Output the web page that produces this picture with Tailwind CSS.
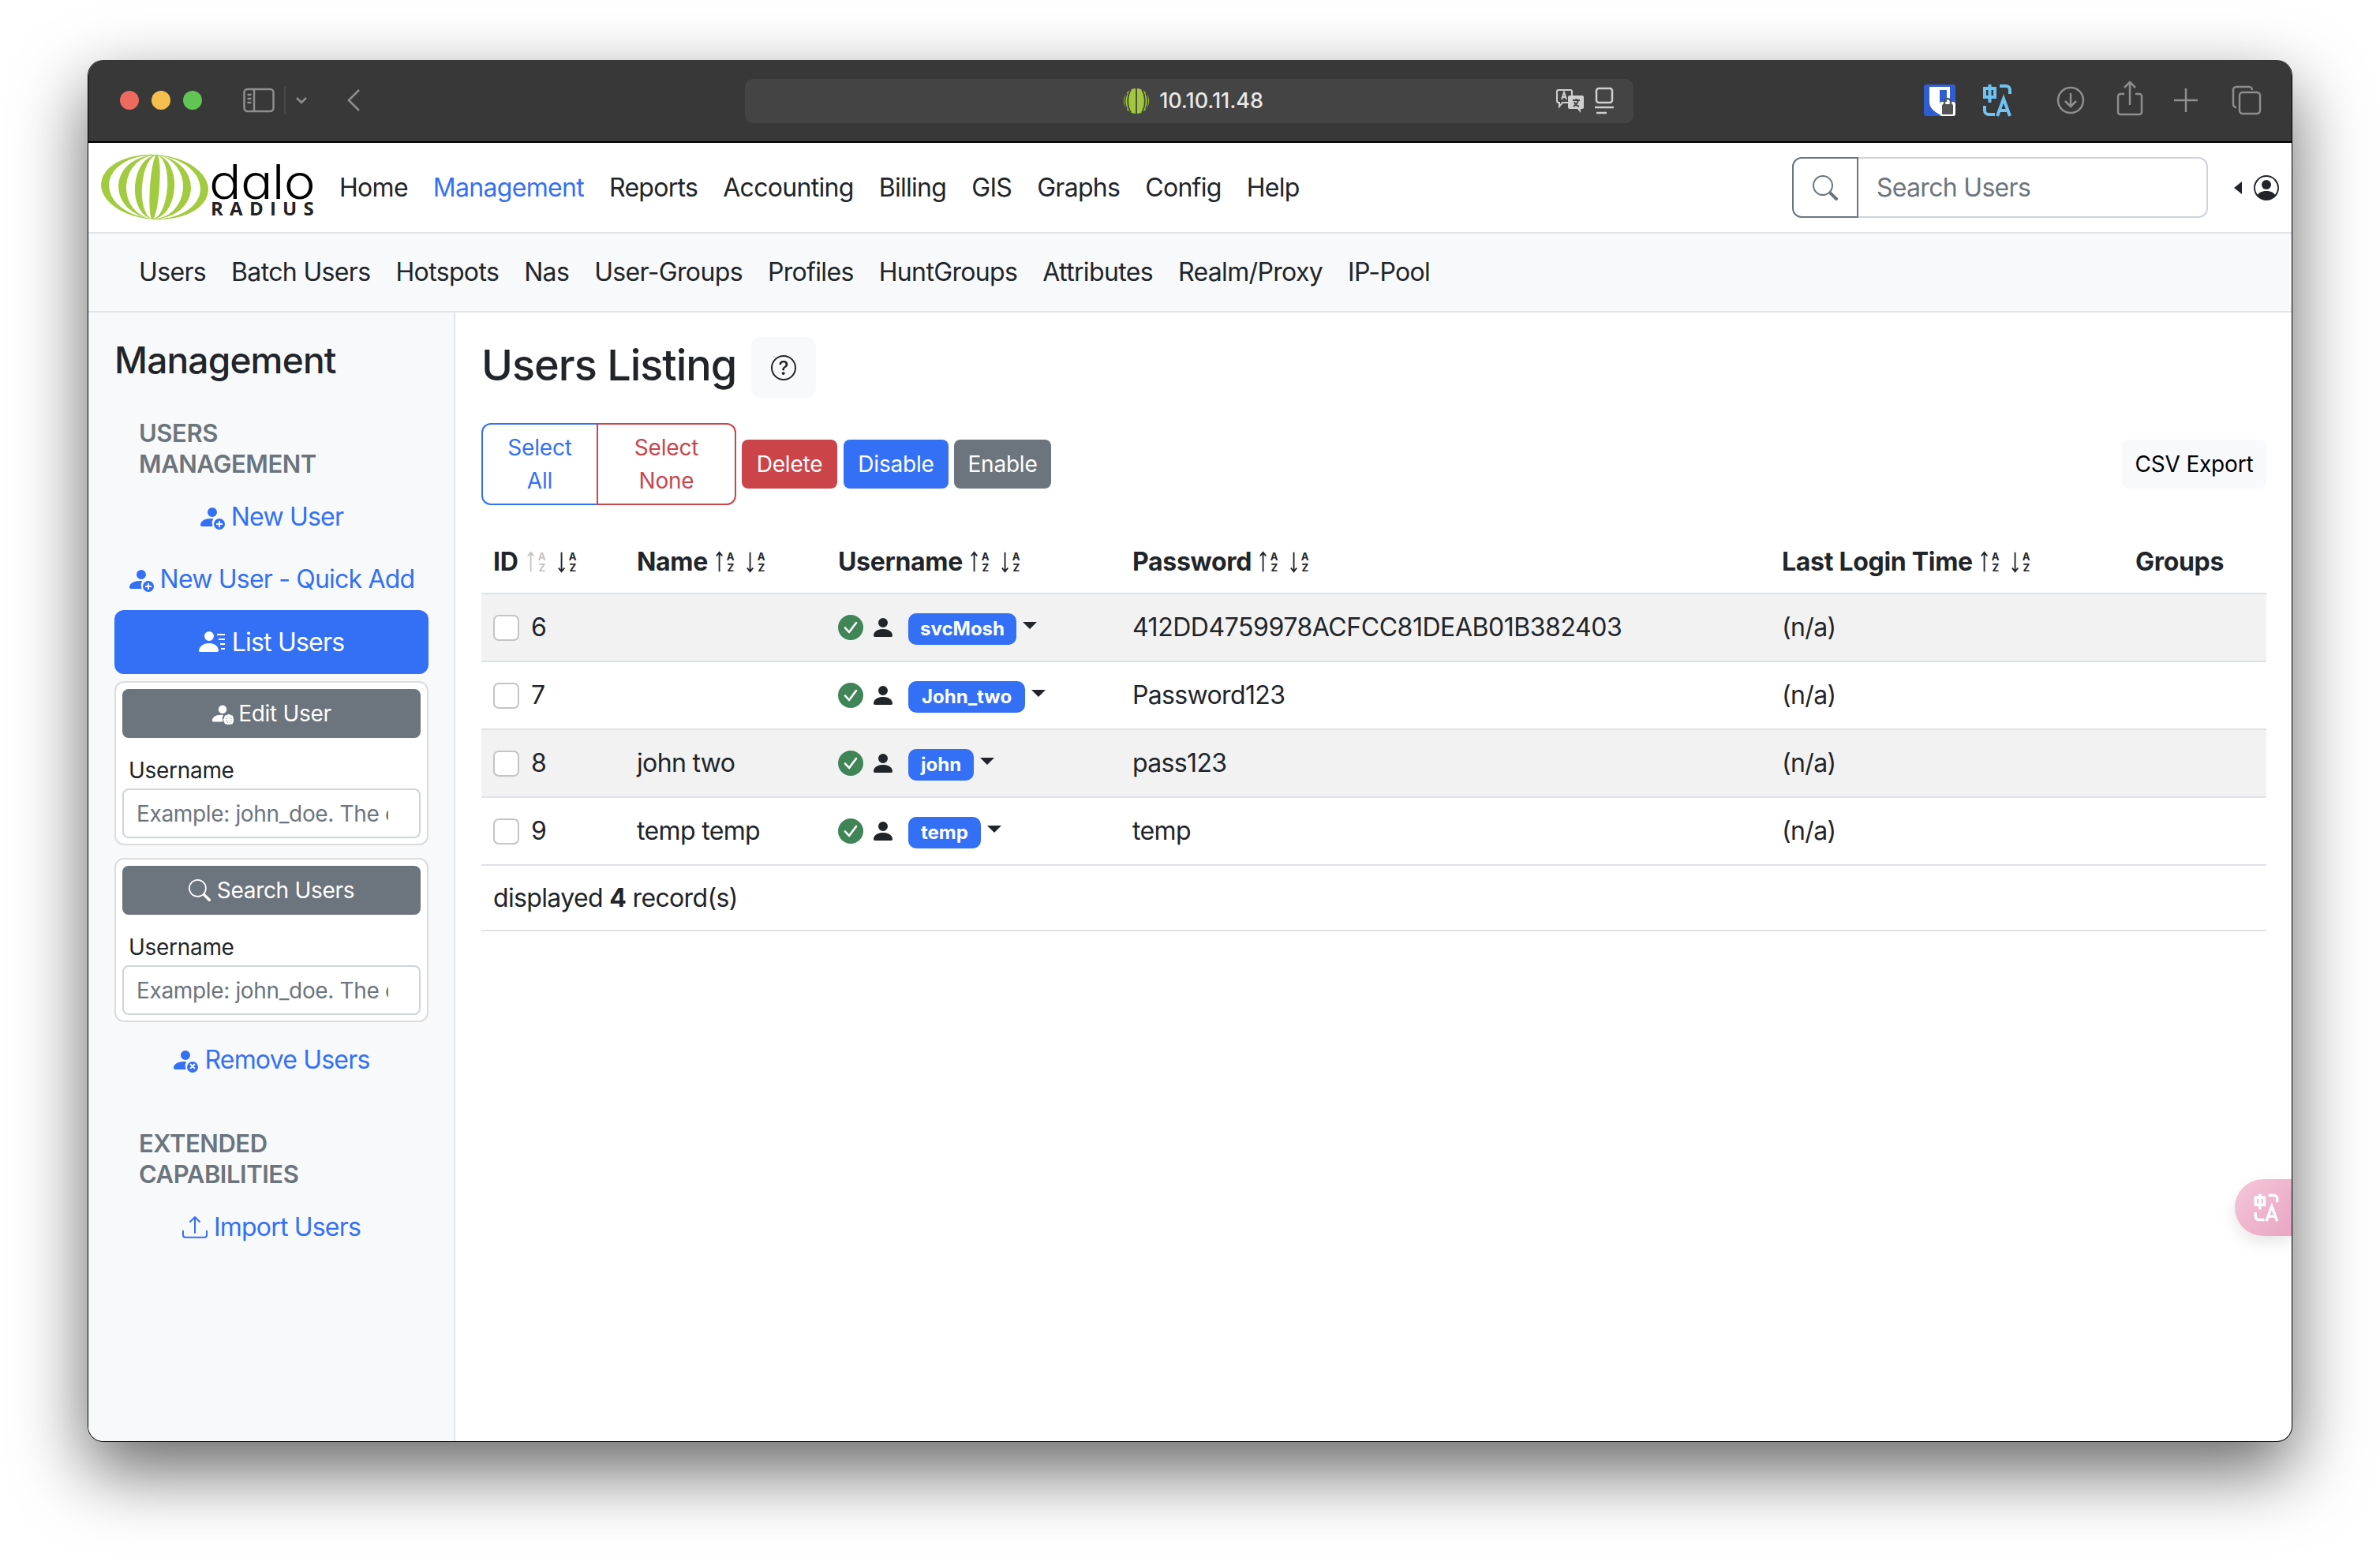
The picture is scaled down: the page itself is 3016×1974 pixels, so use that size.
<!DOCTYPE html>
<html lang="en">
<head>
  <meta charset="UTF-8">
  <title>daloRADIUS - Users Listing</title>
  <script src="https://cdn.jsdelivr.net/npm/@tailwindcss/browser@4"></script>
</head>
<body class="bg-white h-[1974px] overflow-hidden font-['Inter','Liberation_Sans',sans-serif] text-[#212529] text-[32px] tracking-[-0.5px]">
  <!-- shared icons -->
  <svg class="absolute w-0 h-0">
    <symbol id="person-fill" viewBox="0 0 16 16"><path d="M3 14s-1 0-1-1 1-4 6-4 6 3 6 4-1 1-1 1H3Zm5-6a3 3 0 1 0 0-6 3 3 0 0 0 0 6Z"/></symbol>
    <symbol id="check-ok" viewBox="0 0 32 32"><circle cx="16" cy="16" r="16" fill="#408558"/><path d="M9 16.500l5 5.500 9-12" fill="none" stroke="#fff" stroke-width="2.600" stroke-linecap="round" stroke-linejoin="round"/></symbol>
    <symbol id="sort-up" viewBox="0 0 32 32"><path d="M7 29V3M3 8l4-5 4 5" fill="none" stroke="currentColor" stroke-width="2"/><text x="22" y="14" font-size="14" text-anchor="middle" fill="currentColor" font-family="Inter">A</text><text x="22" y="29" font-size="14" text-anchor="middle" fill="currentColor" font-family="Inter">Z</text></symbol>
    <symbol id="sort-down" viewBox="0 0 32 32"><path d="M7 3v26M3 24l4 5 4-5" fill="none" stroke="currentColor" stroke-width="2"/><text x="22" y="14" font-size="14" text-anchor="middle" fill="currentColor" font-family="Inter">A</text><text x="22" y="29" font-size="14" text-anchor="middle" fill="currentColor" font-family="Inter">Z</text></symbol>
    <symbol id="person-add" viewBox="0 0 16 16"><path d="M11 5a3 3 0 1 1-6 0 3 3 0 0 1 6 0ZM1.500 14c-.6 0-1-.4-1-1 0-1 1-4 6.500-4 .6 0 1.100 0 1.600.1A4.500 4.500 0 0 0 8 12.500c0 .5.100 1 .25 1.500H1.500Z"/><path fill-rule="evenodd" d="M12.500 16a3.500 3.500 0 1 0 0-7 3.500 3.500 0 0 0 0 7Zm-.5-5.500h1V12h1.500v1H13v1.500h-1V13h-1.500v-1H12v-1.500Z"/></symbol>
    <symbol id="search" viewBox="0 0 16 16"><path d="M11.742 10.344a6.500 6.500 0 1 0-1.397 1.398h-.001c.03.04.062.078.098.115l3.850 3.850a1 1 0 0 0 1.415-1.414l-3.850-3.850a1.007 1.007 0 0 0-.115-.1zM12 6.500a5.500 5.500 0 1 1-11 0 5.500 5.500 0 0 1 11 0z"/></symbol>
  </svg>

  <div class="absolute left-[111px] top-[76px] w-[2794px] h-[1751px] rounded-[20px] shadow-[0_36px_90px_rgba(0,0,0,0.6)]"></div>

  <div class="absolute left-[111px] top-[76px] w-[2794px] h-[1751px] rounded-[20px] overflow-hidden border-x border-b border-black bg-white flex flex-col">
    <!-- safari toolbar -->
    <div class="h-[105px] shrink-0 bg-[#383838] border-b-2 border-black flex items-center pl-[40px] pb-[2px] text-[#9a9a9a] relative">
      <div class="flex gap-[16px]">
        <span class="w-[24px] h-[24px] rounded-full bg-[#ed6a5e]"></span>
        <span class="w-[24px] h-[24px] rounded-full bg-[#f5bf4f]"></span>
        <span class="w-[24px] h-[24px] rounded-full bg-[#61c554]"></span>
      </div>
      <svg class="ml-[52px]" width="40" height="32" viewBox="0 0 40 32" fill="none" stroke="#8e8e8e" stroke-width="2.500"><rect x="1.500" y="2" width="37" height="28" rx="4"/><path d="M14 2v28M5.500 9h5M5.500 14h5M5.500 19h5" /></svg>
      <div class="w-[2px] h-[36px] bg-[#4a4a4a] ml-[12px]"></div>
      <svg class="ml-[12px]" width="16" height="10" viewBox="0 0 16 10" fill="none" stroke="#8e8e8e" stroke-width="2.500"><path d="M2 2l6 6 6-6"/></svg>
      <svg class="ml-[49px]" width="18" height="30" viewBox="0 0 18 30" fill="none" stroke="#8e8e8e" stroke-width="2.500"><path d="M16 2L3 15l13 13"/></svg>

      <!-- address bar -->
      <div class="absolute left-[832px] top-[24px] w-[1126px] h-[56px] rounded-[10px] bg-[#444444] flex items-center justify-center pl-[10px]">
        <svg class="mr-[12px]" width="34" height="34" viewBox="0 0 34 34"><circle cx="17" cy="17" r="16" fill="#a3c93a"/><path d="M17 1v32M10 2.500c-5 8-5 21 0 29M24 2.500c5 8 5 21 0 29M5 7c-3 6-3 14 0 20M29 7c3 6 3 14 0 20" fill="none" stroke="#444" stroke-width="1.800"/></svg>
        <span class="text-[27px] font-medium text-[#e8e8e8] tracking-[-0.1px]">10.10.11.48</span>
        <svg class="absolute left-[1027px] top-[8px]" width="38" height="40" viewBox="0 0 38 40" fill="none" stroke="#cfcfcf" stroke-width="2"><path d="M4 6h15a2 2 0 0 1 2 2v14H9l-4 5v-5H4a2 2 0 0 1-2-2V8a2 2 0 0 1 2-2Z"/><path d="M18 13h16a2 2 0 0 1 2 2v13a2 2 0 0 1-2 2h-2v5l-4-5H18a2 2 0 0 1-2-2V15a2 2 0 0 1 2-2Z" fill="#cfcfcf" stroke="none"/><path d="M22 19h9M26.500 17v2M29 19c-1 4-3 6-6 8M24 21c1 3 3 5 6 6" stroke="#444"/><path d="M8 18l3-9 3 9M9 15h4" /></svg>
        <svg class="absolute left-[1076px] top-[9px]" width="26" height="38" viewBox="0 0 26 38" fill="none" stroke="#cfcfcf" stroke-width="2.500"><rect x="3" y="3" width="20" height="18" rx="3"/><path d="M1 27h24M3 34h13"/></svg>
      </div>

      <!-- extensions and actions -->
      <svg class="absolute left-[2326px] top-[31px]" width="40" height="40" viewBox="0 0 40 40"><rect width="40" height="40" rx="3" fill="#2f5ed3"/><path d="M7 3h26v19c0 7-5 12-13 16C12 34 7 29 7 22Z" fill="#fff"/><path d="M20 7h9v15c0 4-3 8-9 11Z" fill="#2f5ed3"/><rect x="20" y="22" width="20" height="18" rx="3" fill="#fff"/><rect x="23" y="25" width="14" height="13" rx="1.500" fill="#555"/><path d="M26 25v-3a4 4 0 0 1 8 0v3" fill="none" stroke="#555" stroke-width="2.500"/></svg>
      <svg class="absolute left-[2400px] top-[30px]" width="38" height="42" viewBox="0 0 38 42" fill="none" stroke="#6cc3f5" stroke-width="4"><path d="M3 6h13v11H3ZM9.500 1v23" /><path d="M22 3h8a5 5 0 0 1 5 5v5"/><path d="M3 28v6a5 5 0 0 0 5 5h8"/><path d="M19 41l8-22 8 22M21.500 34h11"/></svg>
      <svg class="absolute left-[2494px] top-[33px]" width="36" height="36" viewBox="0 0 36 36" fill="none" stroke="#8e8e8e" stroke-width="2.500"><circle cx="18" cy="18" r="16"/><path d="M18 9v17M11 19l7 7 7-7"/></svg>
      <svg class="absolute left-[2570px] top-[26px]" width="34" height="46" viewBox="0 0 34 46" fill="none" stroke="#8e8e8e" stroke-width="2.500"><path d="M10 17H5a3 3 0 0 0-3 3v20a3 3 0 0 0 3 3h24a3 3 0 0 0 3-3V20a3 3 0 0 0-3-3h-5M17 31V2M10 9l7-7 7 7"/></svg>
      <svg class="absolute left-[2643px] top-[36px]" width="30" height="30" viewBox="0 0 30 30" fill="none" stroke="#8e8e8e" stroke-width="2.500"><path d="M15 0v30M0 15h30"/></svg>
      <svg class="absolute left-[2716px] top-[32px]" width="38" height="38" viewBox="0 0 38 38" fill="none" stroke="#8e8e8e" stroke-width="2.500"><path d="M6 28a4 4 0 0 1-4-4V6a4 4 0 0 1 4-4h16a4 4 0 0 1 4 4"/><rect x="10" y="9" width="26" height="27" rx="4"/></svg>
    </div>

    <!-- top nav -->
    <div class="h-[115px] shrink-0 flex items-center pl-[15px] pr-[11px] border-b-2 border-[#e2e4e8] tracking-[-0.7px]">
      <svg class="mr-[13px] shrink-0" width="274" height="88" viewBox="0 0 274 88">
        <g transform="rotate(4 69 43)">
          <ellipse cx="69" cy="43" rx="68" ry="41" fill="#a2cb3f"/>
          <ellipse cx="69" cy="43" rx="58" ry="40" fill="#fff"/>
          <ellipse cx="69" cy="43" rx="46" ry="40" fill="#a2cb3f"/>
          <ellipse cx="69" cy="43" rx="36" ry="40" fill="#fff"/>
          <ellipse cx="69" cy="43" rx="25" ry="40" fill="#a2cb3f"/>
          <ellipse cx="69" cy="43" rx="16" ry="40" fill="#fff"/>
          <ellipse cx="69" cy="43" rx="6" ry="41" fill="#a2cb3f"/>
        </g>
        <text x="138" y="58" font-family="Inter" font-weight="300" font-size="60" fill="#000" textLength="134" lengthAdjust="spacingAndGlyphs" style="font-feature-settings:'cv11'">dalo</text>
        <text x="140" y="79" font-family="Open Sans" font-weight="700" font-size="24" fill="#222" textLength="130">RADIUS</text>
      </svg>
      <a class="px-[16px]">Home</a>
      <a class="px-[16px] text-[#3470f6]">Management</a>
      <a class="px-[16px]">Reports</a>
      <a class="px-[16px]">Accounting</a>
      <a class="px-[16px]">Billing</a>
      <a class="px-[16px]">GIS</a>
      <a class="px-[16px]">Graphs</a>
      <a class="px-[16px]">Config</a>
      <a class="px-[16px]">Help</a>
      <div class="ml-auto flex h-[77px] w-[527px]">
        <div class="w-[84px] border-2 border-[#6c757d] rounded-l-[12px] flex items-center justify-center text-[#6c757d]">
          <svg width="32" height="32" fill="currentColor"><use href="#search"/></svg>
        </div>
        <div class="flex-1 border-2 border-l-0 border-[#ced4da] rounded-r-[12px] flex items-center pl-[23px] text-[#6c757d]">Search Users</div>
      </div>
      <div class="ml-[33px] mr-[8px] w-0 h-0 border-y-[8px] border-y-transparent border-r-[10px] border-r-[#212529]"></div>
      <svg class="ml-[7px] mr-[5px]" width="32" height="32" viewBox="0 0 16 16" fill="#212529"><path d="M11 6a3 3 0 1 1-6 0 3 3 0 0 1 6 0z"/><path fill-rule="evenodd" d="M0 8a8 8 0 1 1 16 0A8 8 0 0 1 0 8zm8-7a7 7 0 0 0-5.468 11.370C3.242 11.226 4.805 10 8 10s4.757 1.225 5.468 2.370A7 7 0 0 0 8 1z"/></svg>
    </div>

    <!-- sub nav -->
    <div class="h-[100px] shrink-0 bg-[#f8f9fa] border-b-2 border-[#e2e4e8] flex items-center pl-[48px] tracking-[-0.65px]">
      <a class="px-[16px]">Users</a>
      <a class="px-[16px]">Batch Users</a>
      <a class="px-[16px]">Hotspots</a>
      <a class="px-[16px]">Nas</a>
      <a class="px-[16px]">User-Groups</a>
      <a class="px-[16px]">Profiles</a>
      <a class="px-[16px]">HuntGroups</a>
      <a class="px-[16px]">Attributes</a>
      <a class="px-[16px]">Realm/Proxy</a>
      <a class="px-[16px]">IP-Pool</a>
    </div>

    <div class="flex-1 flex min-h-0 relative">
      <!-- sidebar -->
      <aside class="w-[465px] shrink-0 bg-[#f8f9fa] border-r-2 border-[#e2e4e8] pl-[33px] pr-[32px] tracking-[-0.8px]">
        <h4 class="mt-[31px] text-[46px] leading-[58px] font-medium tracking-[-0.8px]">Management</h4>
        <h6 class="mt-[44px] pl-[31px] text-[31px] leading-[39px] font-semibold tracking-[-0.45px] text-[#6c757d]">USERS<br>MANAGEMENT</h6>
        <a class="mt-[8px] h-[79px] flex items-center justify-center text-[#3470f6]">
          <svg class="mr-[8px]" width="32" height="32" fill="currentColor"><use href="#person-add"/></svg>New User
        </a>
        <a class="h-[79px] flex items-center justify-center text-[#3470f6]">
          <svg class="mr-[8px]" width="32" height="32" fill="currentColor"><use href="#person-add"/></svg>New User - Quick Add
        </a>
        <a class="h-[81px] rounded-[12px] bg-[#3470f6] text-white flex items-center justify-center">
          <svg class="mr-[8px]" width="34" height="32" viewBox="0 0 34 32" fill="currentColor"><path d="M13 14a6 6 0 1 0 0-12 6 6 0 0 0 0 12ZM2 28c-2 0-2-1-2-2 0-2 3-9 13-9s12 7 12 9c0 1-1 2-2 2Z"/><path d="M23 5h10v2H23ZM25 11h8v2h-8ZM27 17h6v2h-6ZM28 23h5v2h-5Z"/></svg>List Users
        </a>

        <div class="mt-[9px] h-[208px] rounded-[12px] border-2 border-[#dcdcdc] bg-white px-[8px] pt-[8px]">
          <div class="h-[62px] rounded-[8px] bg-[#6c757d] text-white text-[28px] flex items-center justify-center tracking-[-0.3px]">
            <svg class="mr-[6px]" width="28" height="28" viewBox="0 0 16 16" fill="currentColor"><path d="M11 5a3 3 0 1 1-6 0 3 3 0 0 1 6 0ZM1.500 14c-.6 0-1-.4-1-1 0-1 1-4 6.500-4 .6 0 1.100 0 1.600.1A4.500 4.500 0 0 0 8 12.500c0 .5.100 1 .25 1.500H1.500Z"/><circle cx="12.500" cy="12.500" r="3" fill="none" stroke="currentColor" stroke-width="1.600"/><path d="M12.500 8.500v8M8.500 12.500h8M9.700 9.700l5.600 5.600M15.300 9.700l-5.600 5.600" stroke="currentColor" stroke-width="1.100"/></svg>Edit User
          </div>
          <label class="block mt-[20px] pl-[8px] text-[28px] leading-[42px] tracking-[-0.3px]">Username</label>
          <input class="block w-full h-[63px] mt-[2px] rounded-[8px] border-2 border-[#ced4da] bg-white pl-[16px] pr-[39px] text-[28px] tracking-[-0.35px] placeholder:text-[#6c757d]" placeholder="Example: john_doe. The exact username">
        </div>

        <div class="mt-[16px] h-[208px] rounded-[12px] border-2 border-[#dcdcdc] bg-white px-[8px] pt-[8px]">
          <div class="h-[62px] rounded-[8px] bg-[#6c757d] text-white text-[28px] flex items-center justify-center tracking-[-0.3px]">
            <svg class="mr-[8px]" width="28" height="28" fill="currentColor"><use href="#search"/></svg>Search Users
          </div>
          <label class="block mt-[20px] pl-[8px] text-[28px] leading-[42px] tracking-[-0.3px]">Username</label>
          <input class="block w-full h-[63px] mt-[2px] rounded-[8px] border-2 border-[#ced4da] bg-white pl-[16px] pr-[39px] text-[28px] tracking-[-0.35px] placeholder:text-[#6c757d]" placeholder="Example: john_doe. The exact username">
        </div>

        <a class="mt-[8px] h-[80px] flex items-center justify-center text-[#3470f6]">
          <svg class="mr-[8px]" width="32" height="32" viewBox="0 0 16 16" fill="currentColor"><path d="M11 5a3 3 0 1 1-6 0 3 3 0 0 1 6 0ZM1.500 14c-.6 0-1-.4-1-1 0-1 1-4 6.500-4 .6 0 1.100 0 1.600.1A4.500 4.500 0 0 0 8 12.500c0 .5.100 1 .25 1.500H1.500Z"/><path fill-rule="evenodd" d="M12.500 16a3.500 3.500 0 1 0 0-7 3.500 3.500 0 0 0 0 7Zm-1.800-5.100.7-.7 1.100 1.100 1.100-1.100.7.7-1.100 1.100 1.100 1.100-.7.7-1.100-1.100-1.100 1.100-.7-.7 1.100-1.100Z"/></svg>Remove Users
        </a>
        <h6 class="mt-[46px] pl-[31px] text-[31px] leading-[39px] font-semibold tracking-[-0.45px] text-[#6c757d]">EXTENDED<br>CAPABILITIES</h6>
        <a class="mt-[8px] h-[80px] flex items-center justify-center text-[#3470f6]">
          <svg class="mr-[8px]" width="32" height="32" viewBox="0 0 16 16" fill="currentColor"><path d="M.5 9.900a.5.5 0 0 1 .5.5v2.500a1 1 0 0 0 1 1h12a1 1 0 0 0 1-1v-2.500a.5.5 0 0 1 1 0v2.500a2 2 0 0 1-2 2H2a2 2 0 0 1-2-2v-2.500a.5.5 0 0 1 .5-.5z"/><path d="M7.646 1.146a.5.5 0 0 1 .708 0l3 3a.5.5 0 0 1-.708.708L8.500 2.707V11.500a.5.5 0 0 1-1 0V2.707L5.354 4.854a.5.5 0 1 1-.708-.708l3-3z"/></svg>Import Users
        </a>
      </aside>

      <!-- main -->
      <main class="flex-1 pl-[33px] pr-[32px] pt-[31px]">
        <div class="flex items-center h-[77px]">
          <h2 class="text-[54px] font-medium tracking-[-1px] mb-[6px]">Users Listing</h2>
          <div class="ml-[19px] w-[82px] h-[77px] rounded-[12px] bg-[#f8f9fa] flex items-center justify-center">
            <svg width="32" height="32" viewBox="0 0 16 16" fill="#212529"><path d="M8 15A7 7 0 1 1 8 1a7 7 0 0 1 0 14zm0 1A8 8 0 1 0 8 0a8 8 0 0 0 0 16z"/><path d="M5.255 5.786a.237.237 0 0 0 .241.247h.825c.138 0 .248-.113.266-.25.09-.656.54-1.134 1.342-1.134.686 0 1.314.343 1.314 1.168 0 .635-.374.927-.965 1.371-.673.489-1.206 1.060-1.168 1.987l.003.217a.25.25 0 0 0 .25.246h.811a.25.25 0 0 0 .25-.25v-.105c0-.718.273-.927 1.010-1.486.609-.463 1.244-.977 1.244-2.056 0-1.511-1.276-2.241-2.673-2.241-1.267 0-2.655.59-2.750 2.286zm1.557 5.763c0 .533.425.927 1.010.927.609 0 1.028-.394 1.028-.927 0-.552-.42-.94-1.029-.94-.584 0-1.009.388-1.009.94z"/></svg>
          </div>
        </div>

        <div class="mt-[32px] h-[104px] flex items-center text-[28px] tracking-[-0.2px]">
          <div class="flex h-[104px] text-center leading-[42px]">
            <div class="w-[146px] border-2 border-r-0 border-[#3470f6] rounded-l-[12px] text-[#3470f6] flex items-center justify-center">Select<br>All</div>
            <div class="w-[177px] border-2 border-[#cb444a] rounded-r-[12px] text-[#cb444a] flex items-center justify-center">Select<br>None</div>
          </div>
          <div class="ml-[7px] w-[121px] h-[62px] rounded-[8px] bg-[#cb444a] text-white flex items-center justify-center">Delete</div>
          <div class="ml-[8px] w-[133px] h-[62px] rounded-[8px] bg-[#3470f6] text-white flex items-center justify-center">Disable</div>
          <div class="ml-[7px] w-[123px] h-[62px] rounded-[8px] bg-[#6c757d] text-white flex items-center justify-center">Enable</div>
          <div class="ml-auto w-[183px] h-[62px] rounded-[8px] bg-[#f8f9fa] flex items-center justify-center text-black">CSV Export</div>
        </div>

        <table class="mt-[32px] w-full table-fixed border-collapse">
          <colgroup>
            <col class="w-[181px]"><col class="w-[255px]"><col class="w-[373px]"><col class="w-[823px]"><col class="w-[448px]"><col>
          </colgroup>
          <thead>
            <tr class="h-[80px] border-b-2 border-[#dee2e6] text-left tracking-[-0.3px]">
              <th class="px-[15px] font-bold"><span class="inline-flex items-center">ID<svg class="ml-[9px] text-[#c4c4c4]" width="30" height="30"><use href="#sort-up"/></svg><svg class="ml-[9px]" width="30" height="30"><use href="#sort-down"/></svg></span></th>
              <th class="px-[16px] font-bold"><span class="inline-flex items-center">Name<svg class="ml-[8px]" width="30" height="30"><use href="#sort-up"/></svg><svg class="ml-[9px]" width="30" height="30"><use href="#sort-down"/></svg></span></th>
              <th class="px-[16px] font-bold"><span class="inline-flex items-center">Username<svg class="ml-[8px]" width="30" height="30"><use href="#sort-up"/></svg><svg class="ml-[9px]" width="30" height="30"><use href="#sort-down"/></svg></span></th>
              <th class="px-[16px] font-bold"><span class="inline-flex items-center">Password<svg class="ml-[8px]" width="30" height="30"><use href="#sort-up"/></svg><svg class="ml-[9px]" width="30" height="30"><use href="#sort-down"/></svg></span></th>
              <th class="px-[16px] font-bold"><span class="inline-flex items-center">Last Login Time<svg class="ml-[8px]" width="30" height="30"><use href="#sort-up"/></svg><svg class="ml-[9px]" width="30" height="30"><use href="#sort-down"/></svg></span></th>
              <th class="px-[16px] font-bold text-left">Groups</th>
            </tr>
          </thead>
          <tbody class="tracking-[-0.65px]">
            <tr class="h-[86px] border-b-2 border-[#dee2e6] bg-[#f2f2f2]">
              <td class="px-[15px]"><div class="flex items-center"><input type="checkbox" class="appearance-none w-[33px] h-[33px] rounded-[7px] border-2 border-[#c4c4c4] bg-white"><span class="ml-[15px]">6</span></div></td>
              <td class="px-[16px]"></td>
              <td class="px-[16px]"><div class="flex items-center"><svg width="32" height="32"><use href="#check-ok"/></svg><svg class="ml-[9px]" width="32" height="32" fill="#212529"><use href="#person-fill"/></svg><span class="ml-[16px] mt-[4px] h-[40px] px-[15px] rounded-[10px] bg-[#3470f6] text-white text-[24px] font-bold flex items-center tracking-[0]">svcMosh</span><span class="ml-[8px] mb-[6px] w-0 h-0 border-x-[9px] border-x-transparent border-t-[9px] border-t-[#212529]"></span></div></td>
              <td class="px-[16px] tracking-[-0.45px]">412DD4759978ACFCC81DEAB01B382403</td>
              <td class="px-[16px]">(n/a)</td>
              <td class="px-[16px]"></td>
            </tr>
            <tr class="h-[86px] border-b-2 border-[#dee2e6]">
              <td class="px-[15px]"><div class="flex items-center"><input type="checkbox" class="appearance-none w-[33px] h-[33px] rounded-[7px] border-2 border-[#c4c4c4] bg-white"><span class="ml-[15px]">7</span></div></td>
              <td class="px-[16px]"></td>
              <td class="px-[16px]"><div class="flex items-center"><svg width="32" height="32"><use href="#check-ok"/></svg><svg class="ml-[9px]" width="32" height="32" fill="#212529"><use href="#person-fill"/></svg><span class="ml-[16px] mt-[4px] h-[40px] px-[17px] rounded-[10px] bg-[#3470f6] text-white text-[24px] font-bold flex items-center tracking-[0]">John_two</span><span class="ml-[8px] mb-[6px] w-0 h-0 border-x-[9px] border-x-transparent border-t-[9px] border-t-[#212529]"></span></div></td>
              <td class="px-[16px]">Password123</td>
              <td class="px-[16px]">(n/a)</td>
              <td class="px-[16px]"></td>
            </tr>
            <tr class="h-[86px] border-b-2 border-[#dee2e6] bg-[#f2f2f2]">
              <td class="px-[15px]"><div class="flex items-center"><input type="checkbox" class="appearance-none w-[33px] h-[33px] rounded-[7px] border-2 border-[#c4c4c4] bg-white"><span class="ml-[15px]">8</span></div></td>
              <td class="px-[16px]">john two</td>
              <td class="px-[16px]"><div class="flex items-center"><svg width="32" height="32"><use href="#check-ok"/></svg><svg class="ml-[9px]" width="32" height="32" fill="#212529"><use href="#person-fill"/></svg><span class="ml-[16px] mt-[4px] h-[40px] px-[16px] rounded-[10px] bg-[#3470f6] text-white text-[24px] font-bold flex items-center tracking-[0]">john</span><span class="ml-[8px] mb-[6px] w-0 h-0 border-x-[9px] border-x-transparent border-t-[9px] border-t-[#212529]"></span></div></td>
              <td class="px-[16px]">pass123</td>
              <td class="px-[16px]">(n/a)</td>
              <td class="px-[16px]"></td>
            </tr>
            <tr class="h-[86px] border-b-2 border-[#dee2e6]">
              <td class="px-[15px]"><div class="flex items-center"><input type="checkbox" class="appearance-none w-[33px] h-[33px] rounded-[7px] border-2 border-[#c4c4c4] bg-white"><span class="ml-[15px]">9</span></div></td>
              <td class="px-[16px]">temp temp</td>
              <td class="px-[16px]"><div class="flex items-center"><svg width="32" height="32"><use href="#check-ok"/></svg><svg class="ml-[9px]" width="32" height="32" fill="#212529"><use href="#person-fill"/></svg><span class="ml-[16px] mt-[4px] h-[40px] px-[16px] rounded-[10px] bg-[#3470f6] text-white text-[24px] font-bold flex items-center tracking-[0]">temp</span><span class="ml-[8px] mb-[6px] w-0 h-0 border-x-[9px] border-x-transparent border-t-[9px] border-t-[#212529]"></span></div></td>
              <td class="px-[16px]">temp</td>
              <td class="px-[16px]">(n/a)</td>
              <td class="px-[16px]"></td>
            </tr>
            <tr class="h-[83px] border-b-2 border-[#dee2e6]">
              <td colspan="6" class="px-[15px]">displayed <b>4</b> record(s)</td>
            </tr>
          </tbody>
        </table>
      </main>

      <!-- translate extension floating button -->
      <div class="absolute right-0 top-[1098px] w-[72px] h-[72px] rounded-l-full bg-gradient-to-br from-[#f5c6da] to-[#e8a6c2] shadow-[0_8px_20px_rgba(0,0,0,0.1)] flex items-center justify-center">
        <svg class="ml-[8px]" width="36" height="36" viewBox="0 0 38 42" fill="none" stroke="#fff" stroke-width="4"><path d="M3 6h13v11H3ZM9.500 1v23"/><path d="M22 3h8a5 5 0 0 1 5 5v5"/><path d="M3 28v6a5 5 0 0 0 5 5h8"/><path d="M19 41l8-22 8 22M21.500 34h11"/></svg>
      </div>
    </div>
  </div>
</body>
</html>
